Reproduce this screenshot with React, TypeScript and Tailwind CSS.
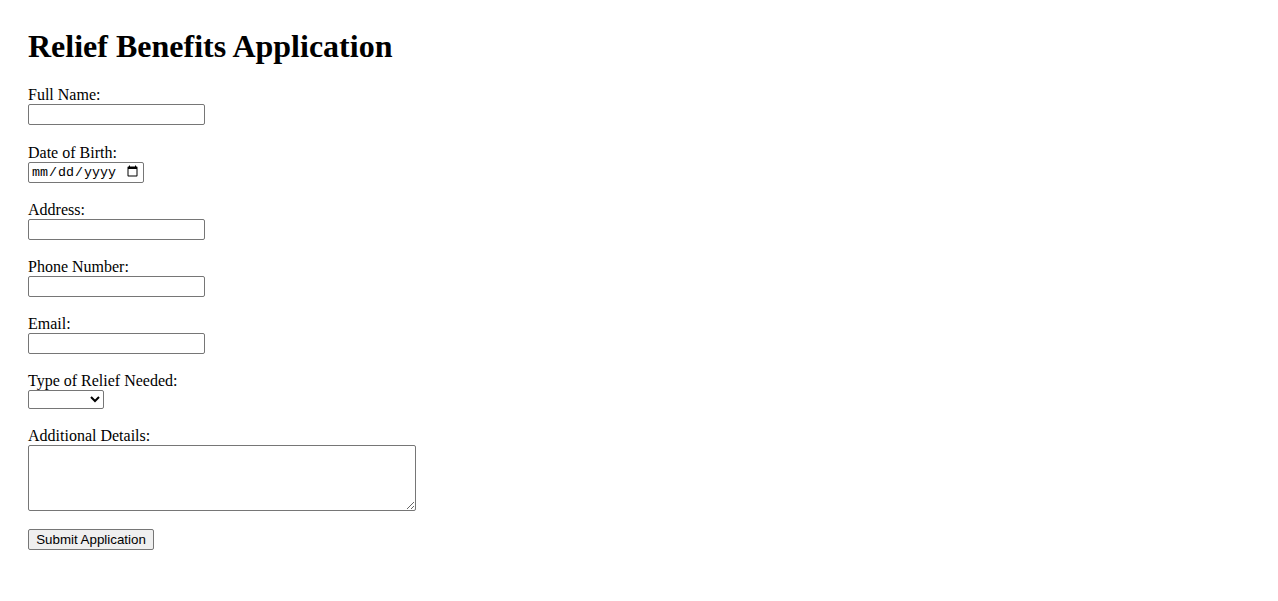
export default function App() {
  const inputCls =
    "block w-[177px] h-[21px] border border-[#767676] rounded-[2px] px-[2px] py-[1px] mb-[18.2px] bg-white font-['Liberation_Sans',Arial,sans-serif] text-[13.33px] text-black";
  const labelCls = "block";
  return (
    <div className="min-h-screen bg-white p-[28px] leading-[normal] text-black font-['Liberation_Serif','Times_New_Roman',serif] text-[16px]">
      <h1 className="text-[32px] font-bold leading-[normal] mb-[21.44px]">Relief Benefits Application</h1>
      <form className="flex flex-col items-start" onSubmit={(e) => e.preventDefault()}>
        <label className={labelCls}>Full Name:</label>
        <input type="text" className={inputCls} />

        <label className={labelCls}>Date of Birth:</label>
        <input
          type="date"
          className="block w-[116px] h-[21px] border border-[#767676] rounded-[2px] px-[2px] py-[1px] mb-[18.2px] bg-white font-['Liberation_Mono',monospace] text-[13.33px] text-black"
        />

        <label className={labelCls}>Address:</label>
        <input type="text" className={inputCls} />

        <label className={labelCls}>Phone Number:</label>
        <input type="tel" className={inputCls} />

        <label className={labelCls}>Email:</label>
        <input type="email" className={inputCls} />

        <label className={labelCls}>Type of Relief Needed:</label>
        <select className="block w-[76px] h-[19px] border border-[#767676] rounded-[2px] mb-[17.4px] bg-white font-['Liberation_Sans',Arial,sans-serif] text-[13.33px] text-black">
          <option value=""></option>
          <option value="food">Food</option>
          <option value="housing">Housing</option>
          <option value="medical">Medical</option>
        </select>

        <label className={labelCls}>Additional Details:</label>
        <textarea className="block w-[388px] h-[66px] border border-[#767676] rounded-[2px] px-[2px] py-[1px] mb-[18px] bg-white resize font-['Liberation_Mono',monospace] text-[13.33px] text-black" />

        <button
          type="submit"
          className="block w-[126px] h-[21px] border border-[#767676] rounded-[2px] bg-[#efefef] px-[6px] font-['Liberation_Sans',Arial,sans-serif] text-[13.33px] leading-[normal] text-black"
        >
          Submit Application
        </button>
      </form>
    </div>
  );
}
